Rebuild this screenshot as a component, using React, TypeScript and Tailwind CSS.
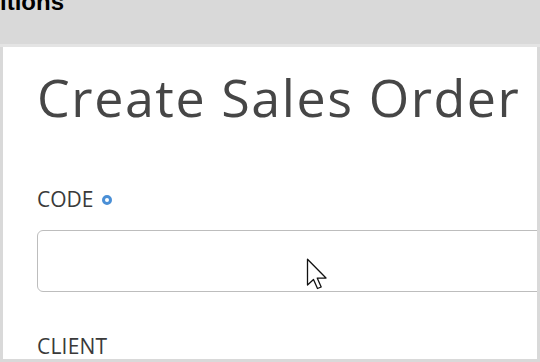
// App.tsx — partial "Create Sales Order" form, clipped view

import React from "react";

// ── Cursor (mouse pointer over the input) ──────────────────────
const PointerCursor = () => (
  <svg
    className="absolute left-[306px] top-[258px] w-[22px] h-[32px]"
    viewBox="0 0 22 32"
    fill="white"
    stroke="#111"
    strokeWidth={1.3}
    strokeLinejoin="round"
  >
    <path d="M1.5 1.2 L1.5 27 L7.5 21.5 L11.5 30.5 L15.2 29 L11.3 20.2 L20 20 Z" />
  </svg>
);

export default function App() {
  return (
    <div className="relative w-[540px] h-[362px] bg-[#d9d9d9] overflow-hidden font-['Open_Sans',sans-serif]">
      {/* top bar with cut-off heading */}
      <div className="h-[44px] overflow-hidden">
        <div className="-mt-[11px] text-[24px] leading-[25px] font-bold text-black font-['Liberation_Sans',sans-serif]">
          itions
        </div>
      </div>
      <div className="h-[3px] bg-[#e4e4e4]" />

      {/* white form panel */}
      <div className="ml-[3px] mr-[3px] h-[312px] bg-white overflow-hidden pl-[34px] pt-[24px]">
        <h1 className="text-[52px] leading-[52px] tracking-[0.03em] text-[#464646] font-normal whitespace-nowrap">
          Create Sales Order
        </h1>

        <div className="mt-[66px] flex items-center gap-[9px]">
          <span className="text-[21px] leading-[21px] text-[#3a3a3a]">
            CODE
          </span>
          <span className="w-[10px] h-[10px] rounded-full border-[3px] border-[#4a8fd6]" />
        </div>

        <div className="mt-[20px] h-[62px] w-[520px] rounded-[6px] border border-[#bdbdbd]" />

        <div className="mt-[44px] text-[21px] leading-[21px] text-[#3a3a3a] tracking-[0.01em]">
          CLIENT
        </div>
      </div>

      <PointerCursor />
    </div>
  );
}
